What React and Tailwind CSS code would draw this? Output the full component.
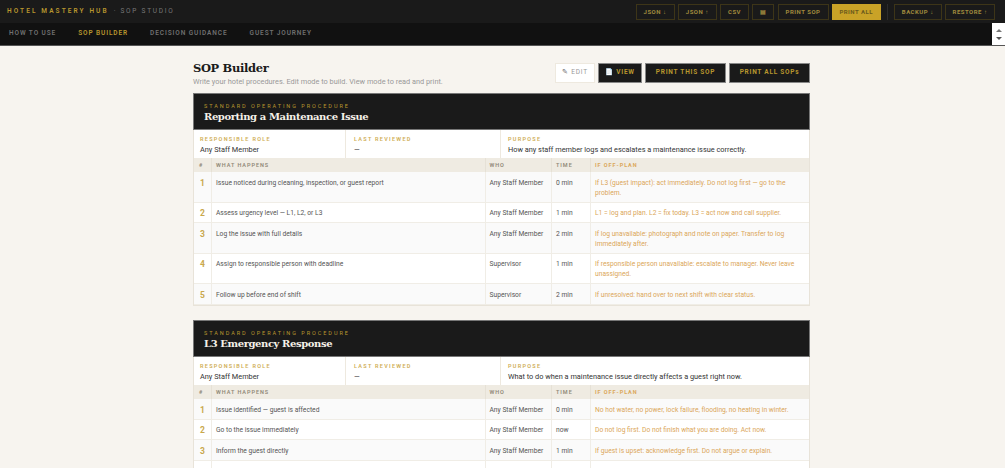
import React from "react"

const TOP_BUTTONS = [
  { label: "JSON ↓", w: "w-[39px]" },
  { label: "JSON ↑", w: "w-[39px]" },
  { label: "CSV", w: "w-[29px]" },
  { label: "▤", w: "w-[22px]" },
  { label: "PRINT SOP", w: "w-[51px]" },
]

const SOPS = [
  {
    title: "Reporting a Maintenance Issue",
    purpose: "How any staff member logs and escalates a maintenance issue correctly.",
    steps: [
      ["Issue noticed during cleaning, inspection, or guest report", "Any Staff Member", "0 min", "If L3 (guest impact): act immediately. Do not log first — go to the problem."],
      ["Assess urgency level — L1, L2, or L3", "Any Staff Member", "1 min", "L1 = log and plan. L2 = fix today. L3 = act now and call supplier."],
      ["Log the issue with full details", "Any Staff Member", "2 min", "If log unavailable: photograph and note on paper. Transfer to log immediately after."],
      ["Assign to responsible person with deadline", "Supervisor", "1 min", "If responsible person unavailable: escalate to manager. Never leave unassigned."],
      ["Follow up before end of shift", "Supervisor", "2 min", "If unresolved: hand over to next shift with clear status."],
    ],
  },
  {
    title: "L3 Emergency Response",
    purpose: "What to do when a maintenance issue directly affects a guest right now.",
    steps: [
      ["Issue identified — guest is affected", "Any Staff Member", "0 min", "No hot water, no power, lock failure, flooding, no heating in winter."],
      ["Go to the issue immediately", "Any Staff Member", "now", "Do not log first. Do not finish what you are doing. Act now."],
      ["Inform the guest directly", "Any Staff Member", "1 min", "If guest is upset: acknowledge first. Do not argue or explain."],
      // next row starts right at the fold, its text isn't visible
      ["", "", "", ""],
    ],
  },
]

function TopButton({ label, w, solid }) {
  return (
    <button
      className={`h-4 ${w} border text-[6px] font-bold tracking-[0.5px] ${
        solid ? "bg-[#c9a227] border-[#c9a227] text-[#6b5a1c]" : "border-[#3d3518] text-[#a08a3e]"
      }`}
    >
      {label}
    </button>
  )
}

function MetaCell({ label, value, className }) {
  return (
    <div className={`pt-[5px] ${className}`}>
      <p className="text-[5.5px] leading-[8px] tracking-[1.28px] font-semibold text-[#cfae55]">{label}</p>
      <p className="leading-[11px] mt-[1px]">{value}</p>
    </div>
  )
}

function SopCard({ sop }) {
  const cols = "grid grid-cols-[18px_274px_66px_39px_1fr]"
  return (
    <section className="mb-[14px] bg-white border border-[#e8e3d9]">
      <header className="h-[37px] bg-[#1a1a1a] pl-[10px] pt-[9px] -mx-px -mt-px border border-[#777]">
        <p className="text-[5.5px] leading-[7px] tracking-[1.95px] text-[#b8962e]">STANDARD OPERATING PROCEDURE</p>
        <h2 className="text-[10px] leading-[14px] font-bold text-[#f5f1e8] font-['DejaVu_Serif',serif] tracking-[-0.4px]">{sop.title}</h2>
      </header>

      <div className="grid grid-cols-[152px_155px_1fr] h-[28px] text-[7.35px] text-[#333]">
        <MetaCell label="RESPONSIBLE ROLE" value="Any Staff Member" className="pl-[6px] border-r border-[#eee9df]" />
        <MetaCell label="LAST REVIEWED" value="—" className="pl-[8px] border-r border-[#eee9df]" />
        <MetaCell label="PURPOSE" value={sop.purpose} className="pl-[7px]" />
      </div>

      <div className={`${cols} h-[14.3px] bg-[#efebe2] text-[5.5px] leading-[14px] tracking-[0.95px] font-semibold text-[#8f8877]`}>
        <div className="pl-[5px] border-r border-[#e6e1d6]">#</div>
        <div className="pl-[4px] border-r border-[#e6e1d6]">WHAT HAPPENS</div>
        <div className="pl-[3.5px] border-r border-[#e6e1d6]">WHO</div>
        <div className="pl-[4px] border-r border-[#e6e1d6]">TIME</div>
        <div className="pl-[4px] font-bold text-[#dba75a]">IF OFF-PLAN</div>
      </div>

      {sop.steps.map((s, i) => (
        <div
          key={i}
          className={`${cols} min-h-[20.5px] border-b border-[#f0ede6] text-[6.7px] leading-[10px] ${i % 2 === 0 ? "bg-[#fafafa]" : "bg-white"}`}
        >
          <div className="pt-[5.5px] pb-[4px] text-center text-[8.5px] font-bold text-[#c9a84c] border-r border-[#f0ede6]">{s[0] && i + 1}</div>
          <div className="pt-[5.5px] pb-[4px] pl-[4px] text-[#555] border-r border-[#f0ede6]">{s[0]}</div>
          <div className="pt-[5.5px] pb-[4px] pl-[3.5px] text-[#555] border-r border-[#f0ede6]">{s[1]}</div>
          <div className="pt-[5.5px] pb-[4px] pl-[4px] text-[#555] border-r border-[#f0ede6]">{s[2]}</div>
          <div className="pt-[5.5px] pb-[4px] px-[4px] text-[#dba75a]">{s[3]}</div>
        </div>
      ))}
    </section>
  )
}

export default function App() {
  return (
    <div className="h-screen overflow-hidden bg-[#f7f4ef] font-['Roboto',sans-serif]">
      {/* Top bar */}
      <div className="h-[23px] bg-[#1a1a1a] flex items-center pl-[7px] pr-[10px]">
        <span className="text-[6.5px] font-semibold tracking-[2.1px] text-[#b8962e]">HOTEL MASTERY HUB</span>
        <span className="ml-[5px] text-[6.5px] tracking-[1.75px] text-[#777]">· SOP STUDIO</span>
        <div className="ml-auto flex items-center gap-[3.25px]">
          {TOP_BUTTONS.map((b) => <TopButton key={b.label} {...b} />)}
          <TopButton label="PRINT ALL" w="w-[49px]" solid />
          <div className="w-px h-4 bg-[#2c2c2c] mx-[2.75px]" />
          <TopButton label="BACKUP ↓" w="w-[48px]" />
          <TopButton label="RESTORE ↑" w="w-[50px]" />
        </div>
      </div>

      {/* Nav tabs */}
      <nav className="h-[23px] bg-[#111] border-b border-[#555] flex items-center">
        <div className="flex items-center gap-[22px] pl-[9px] text-[6.5px] font-semibold tracking-[0.9px] text-[#6f6f6f]">
          <span>HOW TO USE</span>
          <span className="text-[#b8962e]">SOP BUILDER</span>
          <span>DECISION GUIDANCE</span>
          <span>GUEST JOURNEY</span>
        </div>
        <div className="ml-auto w-[13px] h-full bg-white flex flex-col items-center justify-center gap-[5px]">
          <svg width="6" height="3" viewBox="0 0 6 3"><path d="M3 0 6 3H0z" fill="#777" /></svg>
          <svg width="6" height="3" viewBox="0 0 6 3"><path d="M3 3 6 0H0z" fill="#555" /></svg>
        </div>
      </nav>

      <main className="w-[617px] ml-[193px]">
        {/* Page title + actions */}
        <div className="h-[47px] pt-[6px] flex items-center justify-between">
          <div className="pt-[1px]">
            <h1 className="text-[11.5px] leading-[16px] font-bold text-[#1a1a1a] font-['DejaVu_Serif',serif] tracking-[-0.35px]">SOP Builder</h1>
            <p className="text-[7.35px] leading-[11px] text-[#999]">Write your hotel procedures. Edit mode to build. View mode to read and print.</p>
          </div>
          <div className="flex items-center gap-[3px] text-[6.5px] tracking-[0.75px] font-bold">
            <button className="h-5 w-[40px] bg-white border border-[#eee9df] font-normal text-[#999]"><span className="text-[#666]">✎</span> EDIT</button>
            <button className="h-5 w-[44px] bg-[#1a1a1a] border border-[#888] text-[#b8962e]">📄 VIEW</button>
            <button className="h-5 w-[81px] bg-[#1a1a1a] border border-[#888] text-[#b8962e]">PRINT THIS SOP</button>
            <button className="h-5 w-[81px] bg-[#1a1a1a] border border-[#888] text-[#b8962e]">PRINT ALL SOPs</button>
          </div>
        </div>

        {SOPS.map((sop) => <SopCard key={sop.title} sop={sop} />)}
      </main>
    </div>
  )
}
